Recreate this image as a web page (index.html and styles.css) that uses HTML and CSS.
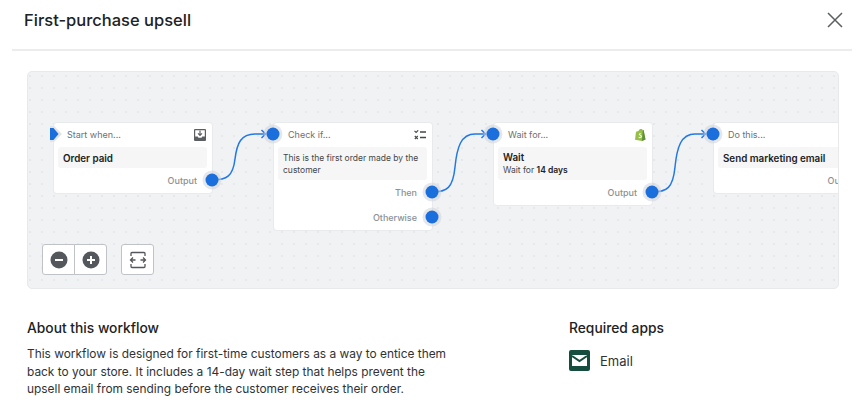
FILE: index.html
```html
<!DOCTYPE html>
<html lang="en">
<head>
<meta charset="utf-8">
<title>First-purchase upsell</title>
<link rel="stylesheet" href="styles.css">
</head>
<body>
<div class="modal">
  <header class="modal-header">
    <h1 class="modal-title">First-purchase upsell</h1>
    <button class="close" aria-label="Close">
      <svg width="16" height="16" viewBox="0 0 16 16"><path d="M1 1l14 14M15 1L1 15" stroke="#5c5f62" stroke-width="1.5" fill="none"/></svg>
    </button>
  </header>

  <section class="canvas">
    <svg class="wires" width="812" height="218" viewBox="1 1 812 218">
      <g class="wire">
        <path d="M185 109C200 109 206 105 208 88C210 72 214 63 228 63H238"/><path d="M234.500 59l4 4l-4 4"/>
        <path d="M405 121C420 121 426 117 428 96C430 76 434 63 448 63H458"/><path d="M454.500 59l4 4l-4 4"/>
        <path d="M625 121C640 121 646 117 648 96C650 76 654 63 668 63H678"/><path d="M674.500 59l4 4l-4 4"/>
      </g>
    </svg>

    <article class="node n1">
      <div class="node-head"><span>Start when...</span>
        <svg class="ic" width="12" height="12" viewBox="0 0 12 12"><path d="M1 0h10a1 1 0 0 1 1 1v10a1 1 0 0 1-1 1H1a1 1 0 0 1-1-1V1a1 1 0 0 1 1-1z" fill="#5c5f62"/><path d="M1.200 1.200h9.600v6.300H8.300l-.8 1.200h-3l-.8-1.200H1.200z" fill="#fff"/><path d="M6 1.500v4.700M4 4.400L6 6.400l2-2" stroke="#5c5f62" stroke-width="1.200" fill="none"/></svg>
      </div>
      <div class="node-box"><strong>Order paid</strong></div>
      <div class="out">Output</div>
    </article>

    <article class="node n2">
      <div class="node-head"><span>Check if...</span>
        <svg class="ic" width="12" height="10" viewBox="0 0 12 10"><path d="M.5 .8l1.600 1.600L4.200.3M.8 6l3 3M3.800 6l-3 3" stroke="#44474a" stroke-width="1.100" fill="none"/><path d="M6 2h6M6 7.500h6" stroke="#44474a" stroke-width="1.300"/></svg>
      </div>
      <div class="node-box">This is the first order made by the customer</div>
      <div class="out">Then</div>
      <div class="out out-next">Otherwise</div>
    </article>

    <article class="node n3">
      <div class="node-head"><span>Wait for...</span>
        <svg class="ic" width="11" height="12" viewBox="0 0 11 12"><path d="M1 2.800L3.500 2C4 .6 5 0 6 0c1 0 1.500.6 1.700 1.200L8.600 1l1.900 9.500L7 12 0 10.700z" fill="#95bf47"/><path d="M8.600 1l1.900 9.500L7 12l.8-10.800z" fill="#5e8e3e"/><path d="M5.800 4.200C4.700 4 3.700 4.600 3.800 5.500c.1 1 2 1.100 2 2 0 .8-1.200.8-2 .3l-.3 1c1.300.7 3.400.3 3.400-1.400 0-1.400-1.900-1.500-1.900-2.200 0-.4.500-.6 1.400-.4z" fill="#fff"/></svg>
      </div>
      <div class="node-box"><strong>Wait</strong><br>Wait for <b>14 days</b></div>
      <div class="out">Output</div>
    </article>

    <article class="node n4">
      <div class="node-head"><span>Do this...</span></div>
      <div class="node-box"><strong>Send marketing email</strong></div>
      <div class="out">Output</div>
    </article>

    <svg class="start" width="16" height="16" viewBox="0 0 16 16"><path d="M2 0h4l8 8l-8 8H2z" fill="#e3e4e6"/><path d="M2 2h3.500l5 6l-5 6H2z" fill="#1a6fdc"/></svg>
    <i class="port" style="left:184px;top:108px"></i>
    <i class="port" style="left:245px;top:62px"></i>
    <i class="port" style="left:404px;top:120px"></i>
    <i class="port" style="left:404px;top:145px"></i>
    <i class="port" style="left:465px;top:62px"></i>
    <i class="port" style="left:624px;top:120px"></i>
    <i class="port" style="left:685px;top:62px"></i>

    <div class="controls">
      <div class="btn-group">
        <button class="ctl" aria-label="Zoom out"><svg width="18" height="18" viewBox="0 0 18 18"><circle cx="9" cy="9" r="8.500" fill="#54575b"/><path d="M5 9h8" stroke="#fff" stroke-width="2"/></svg></button>
        <button class="ctl" aria-label="Zoom in"><svg width="18" height="18" viewBox="0 0 18 18"><circle cx="9" cy="9" r="8.500" fill="#54575b"/><path d="M5 9h8M9 5v8" stroke="#fff" stroke-width="2"/></svg></button>
      </div>
      <button class="ctl solo" aria-label="Fit to screen"><svg width="18" height="18" viewBox="0 0 18 18"><path d="M2 5V2.500a1 1 0 0 1 1-1h12a1 1 0 0 1 1 1V5M2 13v2.500a1 1 0 0 0 1 1h12a1 1 0 0 0 1-1V13M1.500 9h5M11.500 9h5M4 6.500L1.500 9 4 11.500M14 6.500L16.500 9 14 11.500" stroke="#54575b" stroke-width="1.300" fill="none"/></svg></button>
    </div>
  </section>

  <section class="details">
    <div class="about">
      <h2 class="subhead">About this workflow</h2>
      <p class="desc">This workflow is designed for first-time customers as a way to entice them back to your store. It includes a 14-day wait step that helps prevent the upsell email from sending before the customer receives their order.</p>
    </div>
    <div class="apps">
      <h2 class="subhead">Required apps</h2>
      <div class="app">
        <svg width="21" height="21" viewBox="0 0 21 21"><rect width="21" height="21" rx="2" fill="#154d3e"/><rect x="3" y="5" width="15" height="11" fill="#fff"/><path d="M3 6l7.500 5L18 6" stroke="#154d3e" stroke-width="2" fill="none"/></svg>
        <span>Email</span>
      </div>
    </div>
  </section>
</div>
</body>
</html>
```
FILE: styles.css
```css
* { box-sizing: border-box; }
html, body { margin: 0; height: 100%; background: #fff; overflow: hidden; }
body { font-family: Inter, "Liberation Sans", sans-serif; color: #202223; }

.modal { width: 865px; height: 410px; padding: 0 13px 0 12px; }
.modal-header {
  display: flex; justify-content: space-between; align-items: center;
  height: 51px; padding: 0 9px 10px 12px;
  border-bottom: 2px solid #ebecee;
}
.modal-title { margin: 0; font-size: 16.500px; font-weight: 500; line-height: 20px; }
.close { display: flex; padding: 0; border: 0; background: none; }

.canvas {
  position: relative; overflow: hidden;
  width: 812px; height: 218px; margin: 20px 0 0 15px;
  background-color: #f1f2f4;
  background-image: radial-gradient(circle at 1px 1px, #e6e7ea .7px, transparent 1px);
  background-size: 12px 12px; background-position: 13px 3px;
  border: 1px solid #e8e9eb; border-radius: 5px;
}
.wires { position: absolute; left: 0; top: 0; z-index: 2; }
.wire path { fill: none; stroke: #2378e6; stroke-width: 1.500; }

.node {
  position: absolute; top: 51px; width: 158px;
  background: #fff; border-radius: 3px;
  box-shadow: 0 0 0 1px #e9eaec;
  font-size: 8.500px; line-height: 12px; color: #44474a;
}
.n1 { left: 26px; height: 70px; }
.n2 { left: 246px; height: 107px; }
.n3 { left: 466px; height: 82px; }
.n4 { left: 686px; height: 70px; }

.node-head {
  display: flex; justify-content: space-between; align-items: center;
  height: 24px; padding: 0 6px 0 13px;
  font-size: 9px; color: #6d7175;
}
.n2 .node-head, .n3 .node-head, .n4 .node-head { padding-left: 14px; }
.ic { flex: none; }
.node-box { margin: 0 5px 0 4px; padding: 5px 5px 4px; background: #f6f6f7; border-radius: 3px; }
.node-box strong { font-size: 9.800px; font-weight: 600; color: #202223; }
.node-box b { font-weight: 600; color: #202223; }
.n1 .node-box, .n4 .node-box { height: 21px; padding-top: 6px; }
.n2 .node-box, .n3 .node-box { height: 33px; }
.out { margin-top: 7px; padding-right: 15px; text-align: right; font-size: 9px; font-weight: 500; color: #8c9196; }
.out-next { margin-top: 13px; }

.start { position: absolute; left: 20px; top: 54px; z-index: 3; }
.port {
  position: absolute; z-index: 3; width: 13px; height: 13px;
  transform: translate(-6.500px, -6.500px);
  background: #1a6fdc; border-radius: 50%;
  box-shadow: 0 0 0 3px rgba(210, 212, 216, .55);
}

.controls { position: absolute; left: 14px; top: 172px; z-index: 3; display: flex; gap: 14px; }
.btn-group { display: flex; }
.ctl {
  display: flex; align-items: center; justify-content: center;
  width: 33px; height: 31px; padding: 0;
  background: #fff; border: 1px solid #bfc2c6; border-radius: 3px 0 0 3px;
}
.ctl + .ctl { margin-left: -1px; border-radius: 0 3px 3px 0; }
.ctl.solo { border-radius: 3px; }

.details { display: flex; padding: 30px 0 0 15px; }
.about { width: 542px; }
.subhead { margin: 0; font-size: 13.800px; line-height: 18px; font-weight: 500; color: #202223; }
.desc { width: 430px; margin: 8px 0 0; font-size: 11.900px; line-height: 17.500px; color: #303336; }
.app { display: flex; align-items: center; gap: 10px; margin-top: 13px; font-size: 13px; color: #303336; }
.app svg { flex: none; }
```
